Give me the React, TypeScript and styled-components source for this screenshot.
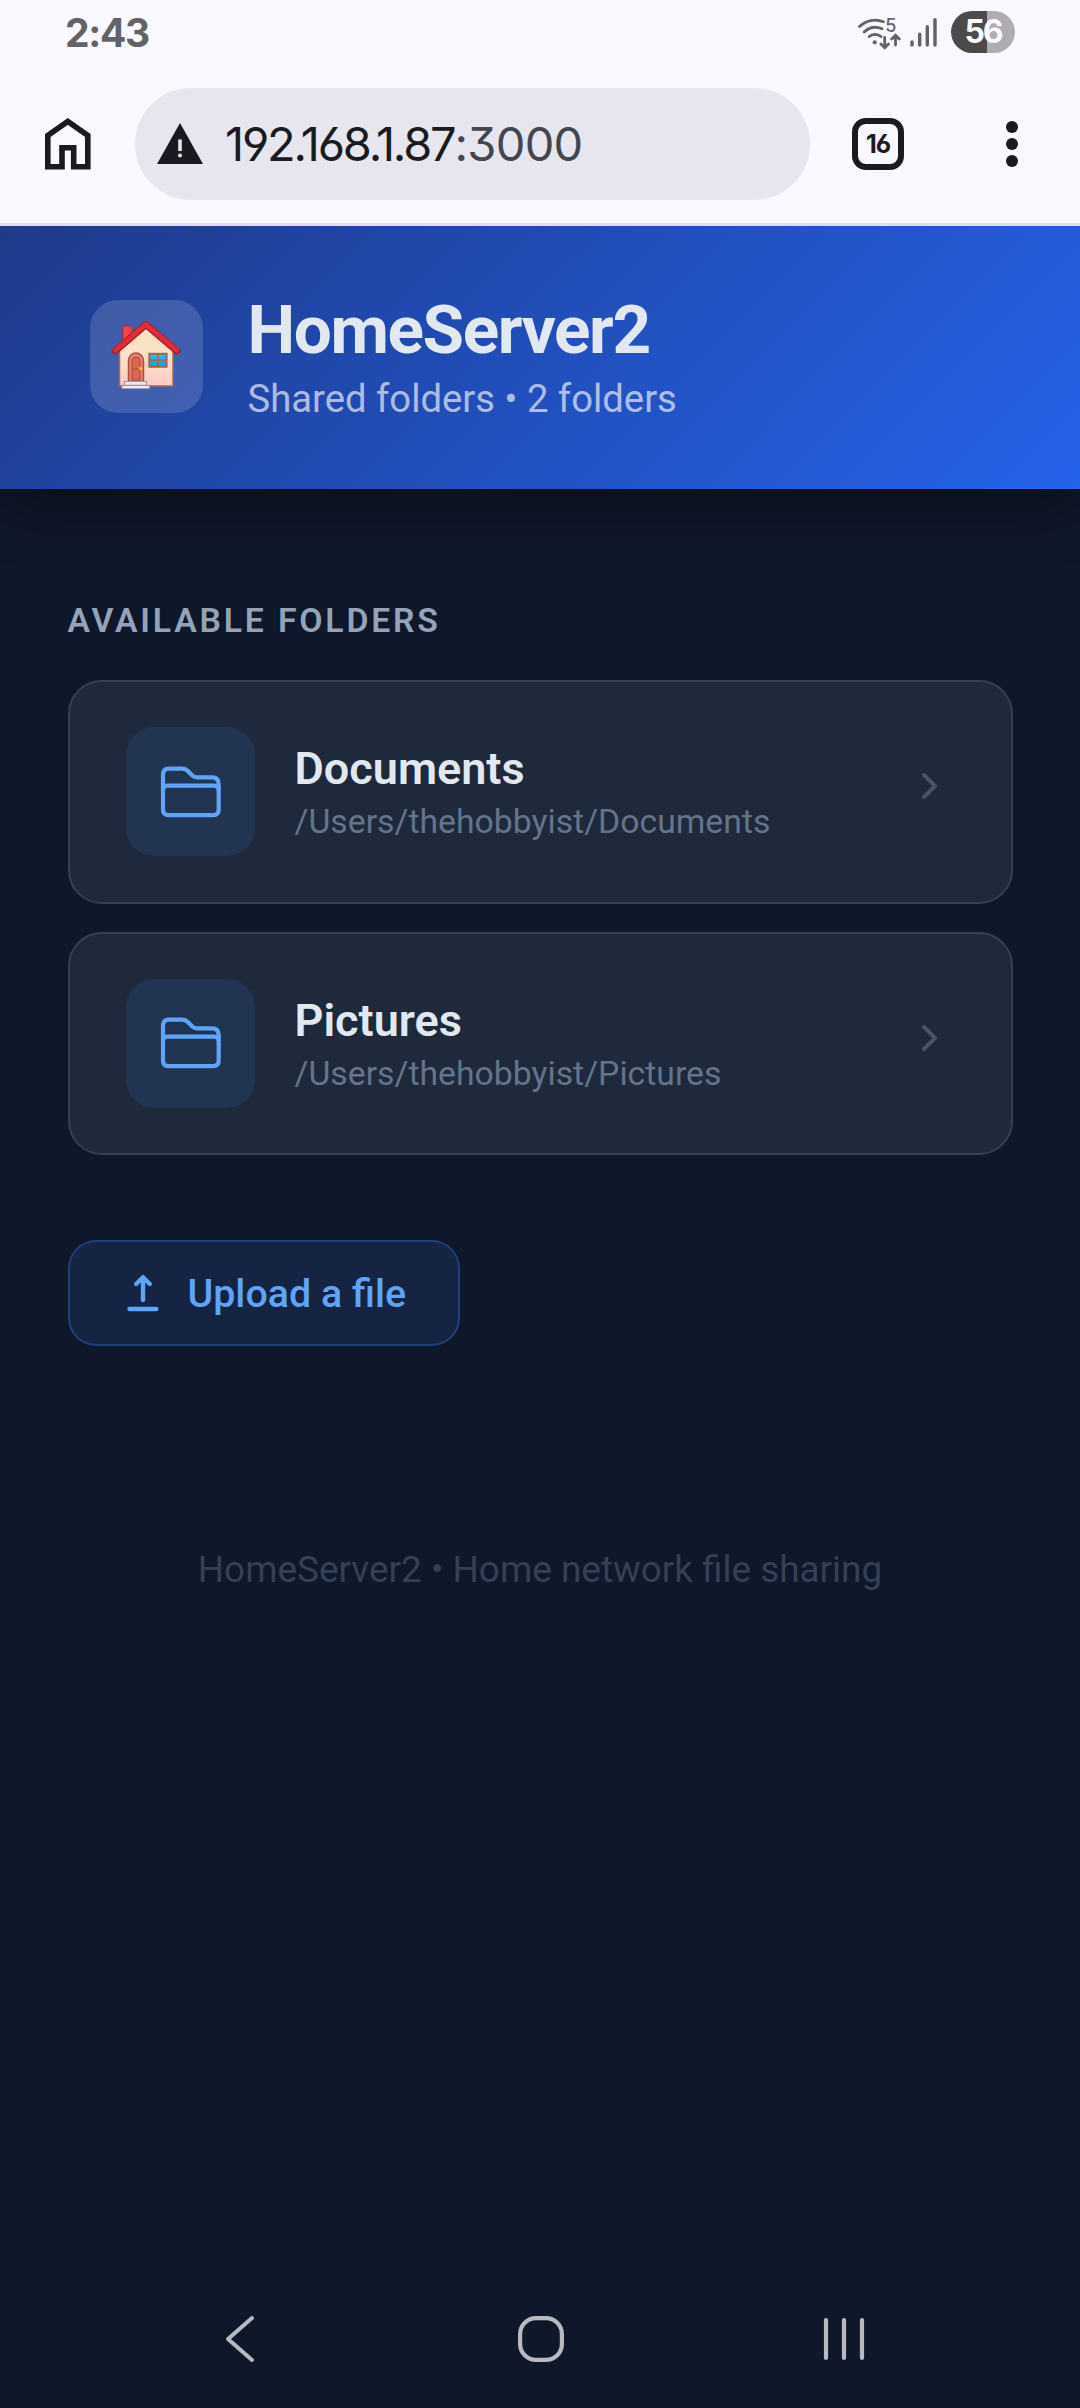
import React from "react";
import styled, { createGlobalStyle } from "styled-components";

const GlobalStyle = createGlobalStyle`
  * { box-sizing: border-box; margin: 0; }
  html, body { background: #0f172a; }
  body { margin: 0; font-family: Roboto, "Liberation Sans", sans-serif; -webkit-font-smoothing: antialiased; }
`;

const Screen = styled.div`
  display: flex;
  flex-direction: column;
  width: 1080px;
  height: 2408px;
  overflow: hidden;
  background: #0f172a;
  color: #e2e8f0;
`;

const StatusBar = styled.div`
  display: flex;
  align-items: center;
  height: 64px;
  padding: 0 65px;
  background: #f9f8ff;
`;

const Clock = styled.span`
  flex: 1;
  padding-top: 1px;
  font: 700 39px/64px Inter, sans-serif;
  letter-spacing: -1.3px;
  color: #636365;
`;

const StatusIcons = styled.div`
  display: flex;
  align-items: center;
`;

const Battery = styled.span`
  width: 64px;
  height: 42px;
  margin-left: 14px;
  border-radius: 21px;
  background: linear-gradient(90deg, #4b4b4c 56%, #afadb2 56%);
  color: #f9f8ff;
  font: 700 32px/42px Inter, sans-serif;
  letter-spacing: -2px;
  text-align: center;
`;

const Toolbar = styled.div`
  position: relative;
  z-index: 1;
  display: flex;
  align-items: center;
  height: 162px;
  padding: 1px 0 0;
  background: #f9f8ff;
  border-bottom: 3px solid #e0e0e8;
`;

const HomeSlot = styled.div`
  display: flex;
  width: 135px;
  padding-left: 45px;
`;

const AddressBar = styled.div`
  display: flex;
  align-items: center;
  width: 675px;
  height: 112px;
  padding-left: 22px;
  border-radius: 56px;
  background: #e7e6ee;
`;

const Url = styled.span`
  margin-left: 22px;
  font-family: Inter, sans-serif;
  font-size: 47px;
  font-weight: 380;
  line-height: 56px;
  font-feature-settings: "ss01";
  letter-spacing: -2.2px;
  color: #1a1b20;
`;

const Port = styled.span`
  letter-spacing: -0.7px;
  color: #44464f;
`;

const Tabs = styled.div`
  display: flex;
  align-items: center;
  justify-content: center;
  width: 52px;
  height: 52px;
  margin-left: 42px;
  border: 6px solid #1a1b20;
  border-radius: 14px;
  color: #1a1b20;
  font: 700 25px/30px Inter, sans-serif;
  font-feature-settings: "ss01";
  letter-spacing: -1px;
`;

const MenuDots = styled.div`
  display: flex;
  flex-direction: column;
  gap: 5.3px;
  margin-left: 102px;
`;

const Dot = styled.i`
  width: 11.8px;
  height: 11.8px;
  border-radius: 50%;
  background: #1a1b20;
`;

const Hero = styled.header`
  display: flex;
  gap: 45px;
  height: 263px;
  padding: 74px 90px 0;
  background: linear-gradient(135deg, #1e3a8a 0%, #2563eb 100%);
  box-shadow: 0 11px 56px rgba(0, 0, 0, 0.4);
`;

const Logo = styled.div`
  display: flex;
  align-items: center;
  justify-content: center;
  width: 112.5px;
  height: 112.5px;
  border-radius: 28px;
  background: rgba(255, 255, 255, 0.15);
`;

const HeroTitle = styled.h1`
  font-size: 67.5px;
  line-height: 79px;
  margin-top: -10px;
  font-weight: 700;
  letter-spacing: -1.4px;
`;

const HeroSubtitle = styled.p`
  font-size: 38.25px;
  line-height: 46px;
  margin-top: 6.5px;
  color: rgba(255, 255, 255, 0.65);
`;

const Main = styled.main`
  flex: 1;
  padding: 112px 67.5px 0;
`;

const SectionLabel = styled.h2`
  font-size: 33.75px;
  line-height: 40px;
  font-weight: 600;
  letter-spacing: 2.8125px;
  text-transform: uppercase;
  color: #94a3b8;
`;

const FolderList = styled.div`
  display: flex;
  flex-direction: column;
  gap: 28.1px;
  margin-top: 39px;
`;

const FolderCard = styled.div`
  display: flex;
  align-items: center;
  height: 223.6px;
  padding: 0 73px 0 56.25px;
  border: 2px solid #334155;
  border-radius: 33.75px;
  background: #1e293b;
`;

const FolderIconBox = styled.div`
  display: flex;
  align-items: center;
  justify-content: center;
  width: 129.4px;
  height: 129.4px;
  padding-left: 1px;
  border-radius: 28px;
  background: rgba(59, 130, 246, 0.12);
`;

const FolderText = styled.div`
  flex: 1;
  margin-left: 39.4px;
  padding-top: 1px;
`;

const FolderName = styled.div`
  font-size: 45px;
  line-height: 53px;
  font-weight: 600;
`;

const FolderPath = styled.div`
  font-size: 33.75px;
  line-height: 40px;
  margin-top: 7px;
  color: #64748b;
`;

const UploadButton = styled.button`
  display: flex;
  align-items: center;
  width: 392.5px;
  height: 106.8px;
  margin-top: 84.4px;
  padding: 0 0 0 56px;
  border: 2px solid rgba(59, 130, 246, 0.3);
  border-radius: 28px;
  background: rgba(59, 130, 246, 0.12);
  color: #60a5fa;
  font: 500 39.375px/46px Roboto, sans-serif;
`;

const UploadLabel = styled.span`
  margin-left: 28px;
  padding-top: 2px;
`;

const Footer = styled.footer`
  margin-top: 202px;
  text-align: center;
  font-size: 36.9px;
  line-height: 44px;
  color: #334155;
`;

const NavBar = styled.nav`
  display: grid;
  grid-template-columns: repeat(3, 302.8px);
  justify-content: center;
  justify-items: center;
  align-items: center;
  height: 138px;
  padding-left: 3px;
`;

const WifiIcon = () => (
  <svg width="44" height="36" viewBox="0 0 44 36" fill="none" stroke="#636365" strokeWidth="2.8" strokeLinecap="round">
    <path d="M2.500 12.500C9 6.500 18 4.500 26.500 7.800" />
    <path d="M7.200 18C12.500 13.200 19 12.200 25 14.800" />
    <path d="M12.200 22.500C15.500 19.600 20.500 19.600 24 22.500" />
    <circle cx="17.700" cy="28.300" r="2.100" fill="#636365" stroke="none" />
    <path d="M27.700 23.500V33.500M23.900 30L27.700 33.700L31.500 30M38.500 31V21.300M34.700 25L38.500 21.200L42.300 25" />
    <text x="28.300" y="18.300" fontFamily="Inter" fontSize="18" fontWeight="500" fill="#636365" stroke="none">5</text>
  </svg>
);

const SignalSvg = styled.svg`
  margin-left: 9px;
`;

const SignalIcon = () => (
  <SignalSvg width="27" height="32" viewBox="0 0 27 32" stroke="#636365" strokeWidth="3.4" strokeLinecap="round">
    <path d="M2 26V29M9.700 18.200V29M17.300 10.800V29M25 3.800V29" />
  </SignalSvg>
);

const HomeIcon = () => (
  <svg width="46" height="52" viewBox="0 0 46 52" fill="none" stroke="#1a1b20" strokeWidth="5.600">
    <path d="M2.800 48.700V17.500L22.800 3.500L42.800 17.500V48.700H28.700V29.700H17V48.700Z" />
  </svg>
);

const WarningIcon = () => (
  <svg width="46" height="42" viewBox="0 0 46 42">
    <path d="M23 0L46 41H0Z" fill="#1a1b20" />
    <path d="M21.200 16.500H24.800V28H21.200Z" fill="#e7e6ee" />
    <circle cx="23" cy="32.500" r="2" fill="#e7e6ee" />
  </svg>
);

const HouseIcon = () => (
  <svg width="70" height="70" viewBox="0 0 70 70">
    <defs>
      <linearGradient id="wall" x1="0" y1="0" x2="0" y2="1">
        <stop offset="0" stopColor="#f8e4bf" />
        <stop offset="0.5" stopColor="#f9e0c8" />
        <stop offset="1" stopColor="#ffccc4" />
      </linearGradient>
      <linearGradient id="glass" x1="0" y1="0" x2="0" y2="1">
        <stop offset="0" stopColor="#22cbe8" />
        <stop offset="1" stopColor="#0c9edc" />
      </linearGradient>
    </defs>
    <rect x="11.800" y="5" width="9.200" height="17" rx="1" fill="#f4474c" stroke="#a72735" strokeWidth="1" />
    <path d="M8.500 29L35 6L62 29V65H8.500Z" fill="url(#wall)" stroke="#a76a58" strokeWidth="1.500" />
    <path d="M4.300 29.800L35 3.700L65.700 29.800" fill="none" stroke="#a11d30" strokeWidth="7" strokeLinejoin="round" strokeLinecap="round" />
    <path d="M4.300 29.300L35 3.300L65.700 29.300" fill="none" stroke="#e32b34" strokeWidth="4.800" strokeLinejoin="round" strokeLinecap="round" />
    <path d="M17.500 60.500V39.500a7.500 7.500 0 0 1 15 0V60.500Z" fill="#e5806a" stroke="#a45146" strokeWidth="1.500" />
    <path d="M21 59V40a4 4 0 0 1 8 0V59ZM21 48H29" fill="#d9684f" stroke="#a94c3f" strokeWidth="1" />
    <circle cx="29.700" cy="47.500" r="1.700" fill="#ffc821" />
    <rect x="38.300" y="32.800" width="17.300" height="13" fill="url(#glass)" stroke="#a56355" strokeWidth="2" />
    <path d="M47 33V46M39 39.300H55" stroke="#a56355" strokeWidth="1.600" />
    <rect x="13.500" y="60.300" width="22" height="4" fill="#ece8f2" stroke="#8d7c91" strokeWidth=".8" />
    <rect x="10.800" y="64.300" width="28" height="3.500" fill="#ece8f2" stroke="#8d7c91" strokeWidth=".8" />
  </svg>
);

const FolderIcon = () => (
  <svg width="62" height="52" viewBox="0 0 62 52" fill="none" stroke="#60a5fa" strokeWidth="4.200" strokeLinejoin="round">
    <path d="M3 24V8.500Q3 2.600 8.900 2.600H22Q25.500 2.600 27.800 5L32.300 9.500Q34.300 11.400 37 11.400H52Q58.700 11.400 58.700 18.500V24" />
    <path d="M3 24Q3 19.700 7.300 19.700H54.200Q58.700 19.700 58.700 24V43.500Q58.700 49.200 53.200 49.200H8.500Q3 49.200 3 43.500Z" />
  </svg>
);

const ChevronSvg = styled.svg`
  margin-top: -11px;
`;

const ChevronIcon = () => (
  <ChevronSvg width="17" height="28" viewBox="0 0 17 28" fill="none" stroke="#475569" strokeWidth="4" strokeLinecap="round" strokeLinejoin="round">
    <path d="M3 3L14 14L3 25" />
  </ChevronSvg>
);

const UploadIcon = () => (
  <svg width="34" height="38" viewBox="0 0 34 38" fill="none" stroke="#60a5fa" strokeWidth="4.400" strokeLinecap="round" strokeLinejoin="round">
    <path d="M17 26V4M10.200 10L17 3.200L23.800 10M3.500 35H30.300" />
  </svg>
);

const folders = [
  { name: "Documents", path: "/Users/thehobbyist/Documents" },
  { name: "Pictures", path: "/Users/thehobbyist/Pictures" },
];

export default function App() {
  return (
    <Screen>
      <GlobalStyle />
      <StatusBar>
        <Clock>2:43</Clock>
        <StatusIcons>
          <WifiIcon />
          <SignalIcon />
          <Battery>56</Battery>
        </StatusIcons>
      </StatusBar>
      <Toolbar>
        <HomeSlot><HomeIcon /></HomeSlot>
        <AddressBar>
          <WarningIcon />
          <Url>192.168.1.87<Port>:3000</Port></Url>
        </AddressBar>
        <Tabs>16</Tabs>
        <MenuDots><Dot /><Dot /><Dot /></MenuDots>
      </Toolbar>
      <Hero>
        <Logo><HouseIcon /></Logo>
        <div>
          <HeroTitle>HomeServer2</HeroTitle>
          <HeroSubtitle>Shared folders • 2 folders</HeroSubtitle>
        </div>
      </Hero>
      <Main>
        <SectionLabel>Available folders</SectionLabel>
        <FolderList>
          {folders.map((folder) => (
            <FolderCard key={folder.name}>
              <FolderIconBox><FolderIcon /></FolderIconBox>
              <FolderText>
                <FolderName>{folder.name}</FolderName>
                <FolderPath>{folder.path}</FolderPath>
              </FolderText>
              <ChevronIcon />
            </FolderCard>
          ))}
        </FolderList>
        <UploadButton>
          <UploadIcon />
          <UploadLabel>Upload a file</UploadLabel>
        </UploadButton>
        <Footer>HomeServer2 • Home network file sharing</Footer>
      </Main>
      <NavBar>
        <svg width="32" height="48" viewBox="0 0 32 48" fill="none" stroke="#b9bac1" strokeWidth="4" strokeLinecap="round" strokeLinejoin="round">
          <path d="M29 3L5 24L29 45" />
        </svg>
        <svg width="46" height="46" viewBox="0 0 46 46" fill="none" stroke="#b9bac1" strokeWidth="4.200">
          <rect x="2.100" y="2.100" width="41.800" height="41.800" rx="16" />
        </svg>
        <svg width="42" height="46" viewBox="0 0 42 46" stroke="#b9bac1" strokeWidth="4.200" strokeLinecap="round">
          <path d="M3 4V42M21 4V42M39 4V42" />
        </svg>
      </NavBar>
    </Screen>
  );
}
